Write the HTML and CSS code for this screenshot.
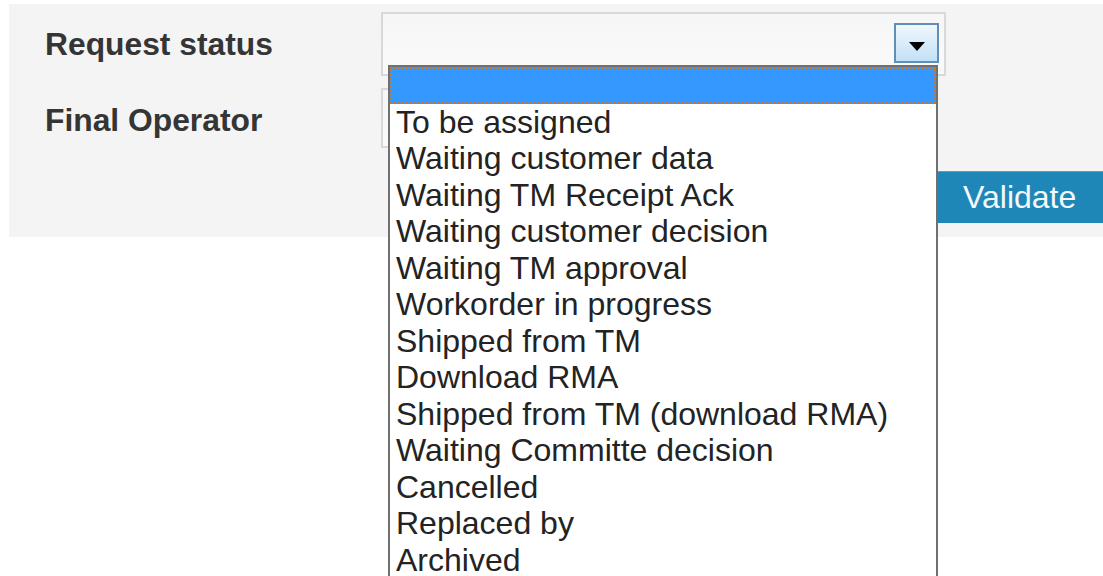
FILE: index.html
```html
<!DOCTYPE html>
<html lang="en">
<head>
<meta charset="utf-8">
<title>Request</title>
<link rel="stylesheet" href="styles.css">
</head>
<body>
<form class="panel">
  <div class="field">
    <span class="label">Request status</span>
    <div class="select is-open">
      <span class="select-btn">
        <svg width="16" height="9" viewBox="0 0 16 9"><polygon points="0,0 16,0 8,9" fill="#000"/></svg>
      </span>
      <ul class="listbox">
        <li class="option is-active">&nbsp;</li>
        <li class="option">To be assigned</li>
        <li class="option">Waiting customer data</li>
        <li class="option">Waiting TM Receipt Ack</li>
        <li class="option">Waiting customer decision</li>
        <li class="option">Waiting TM approval</li>
        <li class="option">Workorder in progress</li>
        <li class="option">Shipped from TM</li>
        <li class="option">Download RMA</li>
        <li class="option">Shipped from TM (download RMA)</li>
        <li class="option">Waiting Committe decision</li>
        <li class="option">Cancelled</li>
        <li class="option">Replaced by</li>
        <li class="option">Archived</li>
      </ul>
    </div>
  </div>
  <div class="field field-operator">
    <span class="label">Final Operator</span>
    <div class="select select-short"></div>
  </div>
  <div class="actions">
    <button type="button" class="btn-validate">Validate</button>
  </div>
</form>
</body>
</html>
```

FILE: styles.css
```css
html, body {
  margin: 0;
  padding: 0;
  background: #fff;
  overflow: hidden;
  height: 576px;
}

.panel {
  margin: 4px 0 0 9px;
  padding: 8px 0 14px 0;
  background: #f4f4f4;
  display: flex;
  flex-direction: column;
  font-family: "Liberation Sans", Arial, sans-serif;
}

.field {
  display: flex;
  align-items: center;
}

.field-operator {
  margin-top: 12px;
}

.label {
  box-sizing: border-box;
  width: 372px;
  padding-left: 36px;
  font-size: 31.8px;
  line-height: 36px;
  font-weight: bold;
  color: #353535;
}

.field-operator .label {
  padding-top: 3px;
}

.select {
  position: relative;
  box-sizing: border-box;
  width: 565px;
  height: 64px;
  border: 2px solid #d8d8d8;
  background: linear-gradient(#f6f6f6, #fafafa);
  display: flex;
  justify-content: flex-end;
  align-items: flex-start;
  padding: 9px 5px;
}

.select-short {
  width: 545px;
  height: 60px;
}

.select-btn {
  box-sizing: border-box;
  width: 45px;
  height: 40px;
  border: 2px solid #5f8fb8;
  background: linear-gradient(#f0f7fd, #c2e1f6);
  display: flex;
  align-items: center;
  justify-content: center;
  padding-top: 6px;
}

.listbox {
  position: absolute;
  z-index: 2;
  left: 5px;
  top: 51px;
  width: 550px;
  box-sizing: border-box;
  margin: 0;
  padding: 0;
  list-style: none;
  background: #fff;
  border: 2px solid #707070;
}

.option {
  height: 36.5px;
  line-height: 36.5px;
  padding-left: 6px;
  font-size: 32px;
  color: #232323;
  white-space: nowrap;
}

.option.is-active {
  background: #3399ff;
  outline: 2px dotted #c9782c;
  outline-offset: -2px;
}

.actions {
  margin-top: 23px;
  display: flex;
  justify-content: flex-end;
}

.btn-validate {
  width: 173px;
  height: 52px;
  border: 0;
  border-top: 1px solid #4aa3cf;
  background: #1f86b8;
  color: #f2f8fb;
  font-family: "Liberation Sans", Arial, sans-serif;
  font-size: 32px;
  text-align: left;
  padding: 0 0 0 33px;
}
```
